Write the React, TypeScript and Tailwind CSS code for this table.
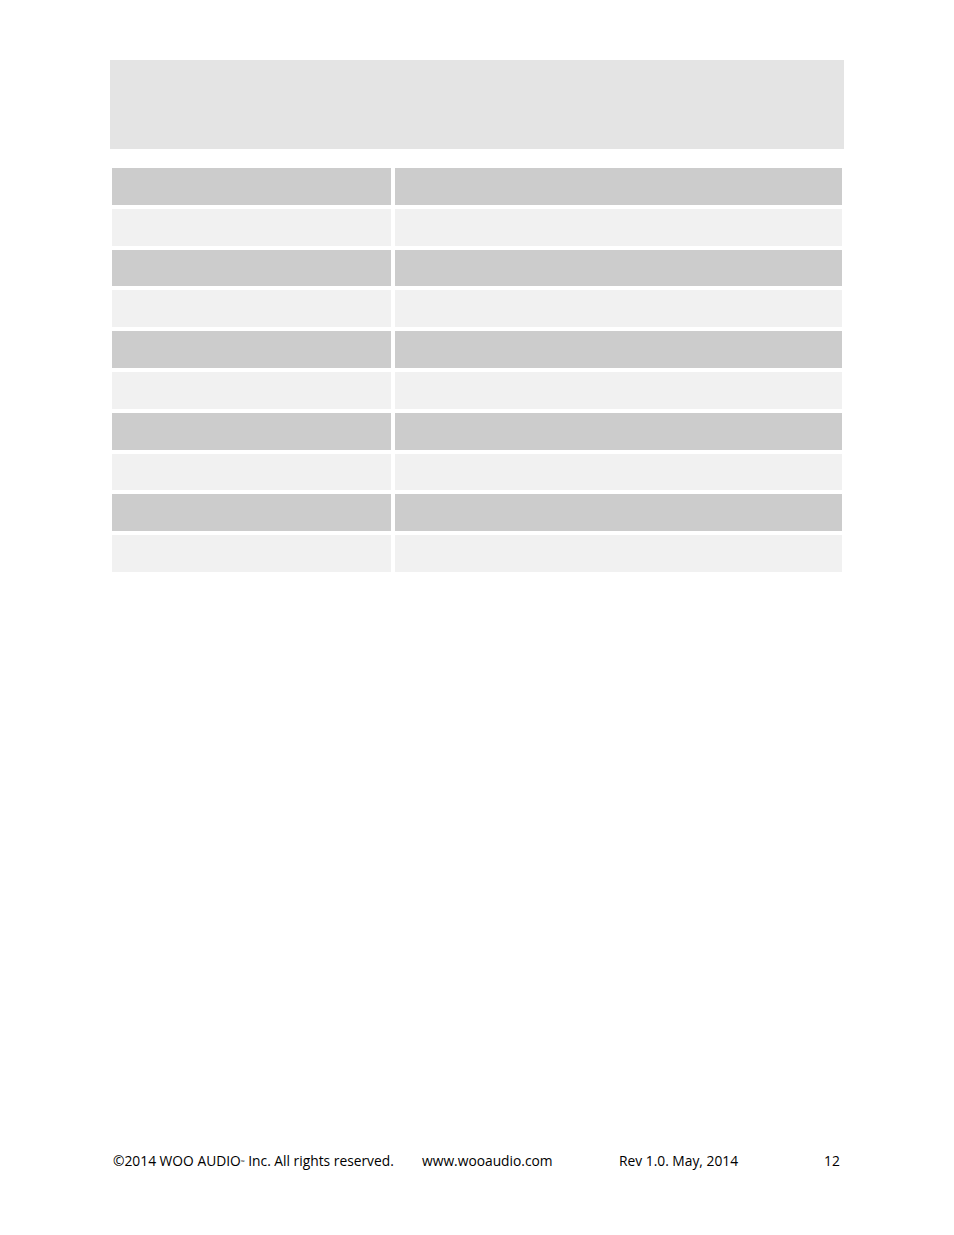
const rows = Array.from({ length: 10 }, (_, i) => i);

export default function App() {
  return (
    <div className="relative w-[954px] h-[1235px] bg-white overflow-hidden" style={{ fontFamily: '"Open Sans", "Liberation Sans", sans-serif' }}>
      <div className="pt-[60px] pl-[110px]">
        {/* title band */}
        <div className="w-[734px] h-[89px] bg-[#e4e4e4]" />

        {/* spec table */}
        <div className="mt-[19px] ml-[2px] grid grid-cols-[279px_447px] gap-x-[4px] gap-y-[4px]">
          {rows.map((i) => (
            <div key={i} className="contents">
              <div className={i % 2 === 0 ? "h-[36.8px] bg-[#cccccc]" : "h-[36.8px] bg-[#f1f1f1]"} />
              <div className={i % 2 === 0 ? "h-[36.8px] bg-[#cccccc]" : "h-[36.8px] bg-[#f1f1f1]"} />
            </div>
          ))}
        </div>
      </div>

      {/* footer */}
      <div className="absolute left-[113px] top-[1151px] flex items-baseline text-[13.8px] text-black leading-[20px]">
        <span className="w-[309px] whitespace-nowrap">
          ©2014 WOO AUDIO<sup className="text-[5px]">™</sup> Inc. All rights reserved.
        </span>
        <span className="w-[197px] whitespace-nowrap">www.wooaudio.com</span>
        <span className="w-[205px] whitespace-nowrap">Rev 1.0. May, 2014</span>
        <span className="whitespace-nowrap">12</span>
      </div>
    </div>
  );
}
